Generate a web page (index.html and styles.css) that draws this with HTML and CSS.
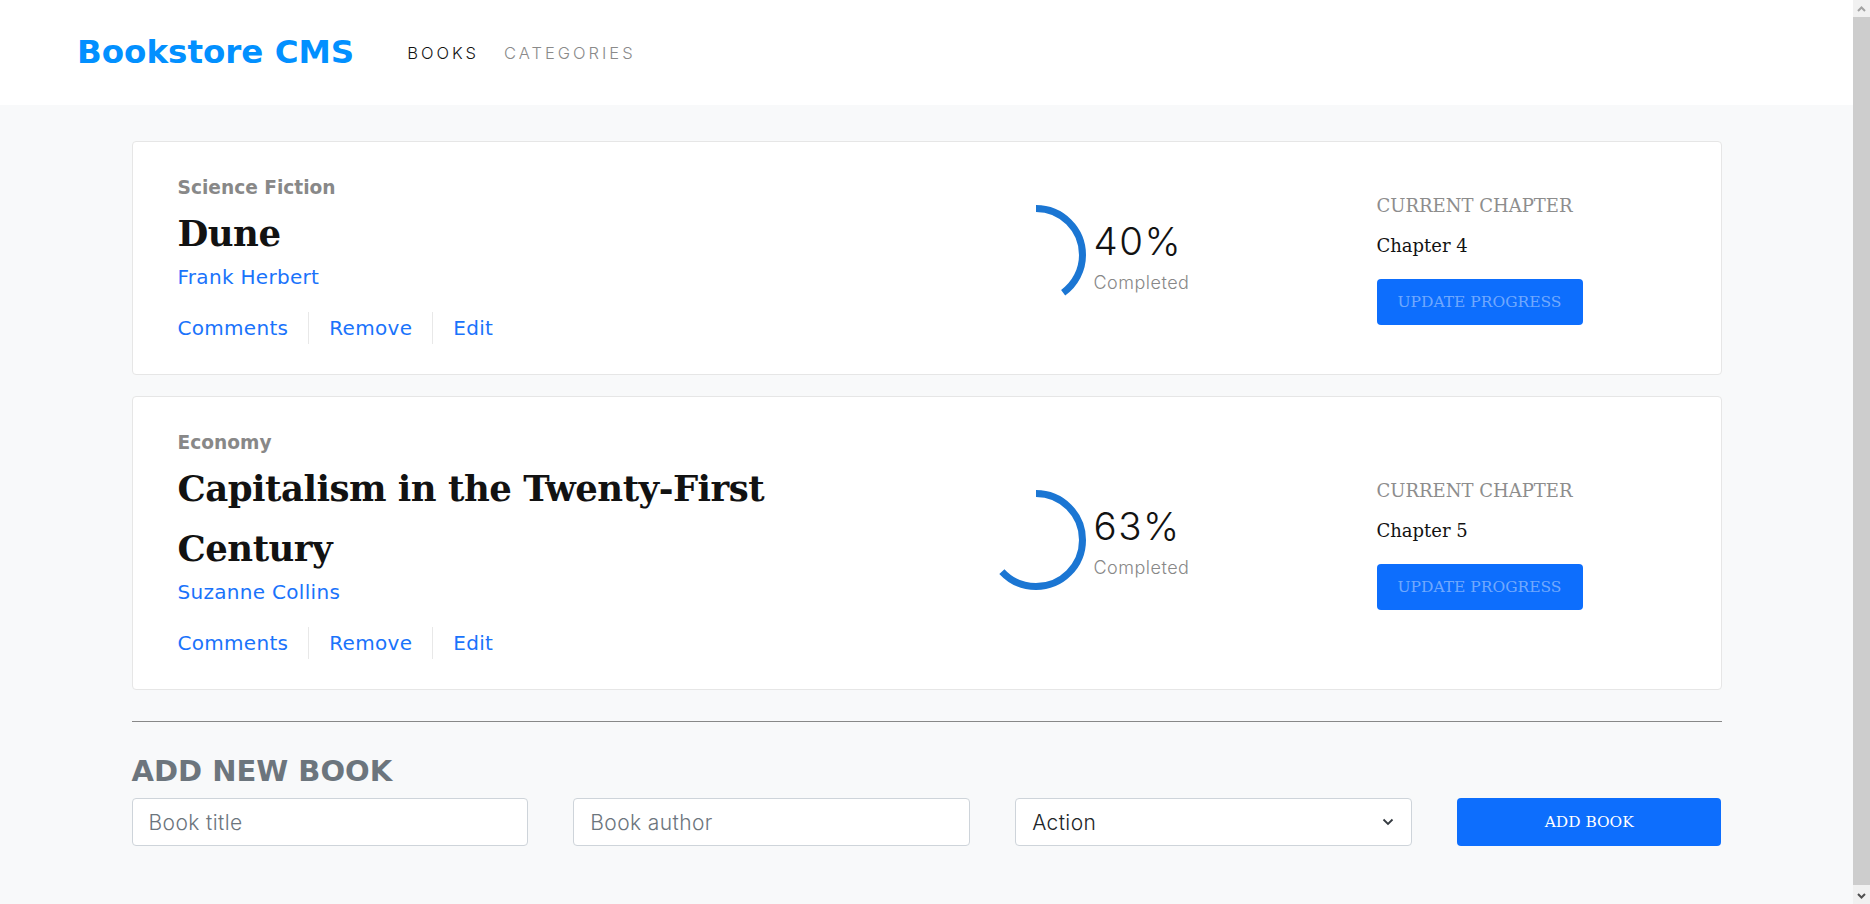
FILE: index.html
```html
<!DOCTYPE html>
<html lang="en">
<head>
<meta charset="utf-8">
<title>Bookstore CMS</title>
<link rel="stylesheet" href="styles.css">
</head>
<body>
<div class="page">
  <header class="topbar">
    <h1 class="logo">Bookstore CMS</h1>
    <nav class="nav">
      <a class="nav-link active" href="#">BOOKS</a>
      <a class="nav-link" href="#">CATEGORIES</a>
    </nav>
  </header>
  <main class="container">
    <ul class="book-list">
      <li class="card">
        <div class="book-info">
          <p class="category">Science Fiction</p>
          <h2 class="title">Dune</h2>
          <p class="author">Frank Herbert</p>
          <div class="actions">
            <button class="action" type="button">Comments</button>
            <button class="action" type="button">Remove</button>
            <button class="action" type="button">Edit</button>
          </div>
        </div>
        <div class="progress">
          <svg class="ring" viewBox="0 0 100 100" aria-hidden="true">
            <circle class="ring-arc" cx="50" cy="50" r="46.5" stroke-dasharray="116.9 400" transform="rotate(-90 50 50)"/>
          </svg>
          <div class="progress-text">
            <p class="percent">40%</p>
            <p class="completed">Completed</p>
          </div>
        </div>
        <div class="chapter">
          <p class="chapter-label">CURRENT CHAPTER</p>
          <p class="chapter-name">Chapter 4</p>
          <button class="update-btn" type="button">UPDATE PROGRESS</button>
        </div>
      </li>
      <li class="card">
        <div class="book-info">
          <p class="category">Economy</p>
          <h2 class="title">Capitalism in the Twenty-First Century</h2>
          <p class="author">Suzanne Collins</p>
          <div class="actions">
            <button class="action" type="button">Comments</button>
            <button class="action" type="button">Remove</button>
            <button class="action" type="button">Edit</button>
          </div>
        </div>
        <div class="progress">
          <svg class="ring" viewBox="0 0 100 100" aria-hidden="true">
            <circle class="ring-arc" cx="50" cy="50" r="46.5" stroke-dasharray="184.1 400" transform="rotate(-90 50 50)"/>
          </svg>
          <div class="progress-text">
            <p class="percent">63%</p>
            <p class="completed">Completed</p>
          </div>
        </div>
        <div class="chapter">
          <p class="chapter-label">CURRENT CHAPTER</p>
          <p class="chapter-name">Chapter 5</p>
          <button class="update-btn" type="button">UPDATE PROGRESS</button>
        </div>
      </li>
    </ul>
    <hr class="divider">
    <section class="add-book">
      <h2 class="form-title">ADD NEW BOOK</h2>
      <form class="form">
        <input class="field" type="text" placeholder="Book title">
        <input class="field" type="text" placeholder="Book author">
        <div class="select-wrap">
          <select class="field select">
            <option>Action</option>
            <option>Science Fiction</option>
            <option>Economy</option>
          </select>
          <svg class="chevron" viewBox="0 0 12 8" aria-hidden="true">
            <path d="M1.5 1.5 6 6l4.5-4.5"/>
          </svg>
        </div>
        <button class="add-btn" type="button">ADD BOOK</button>
      </form>
    </section>
  </main>
</div>
<div class="scrollbar" aria-hidden="true">
  <div class="sb-btn">
    <svg class="sb-arrow sb-up" viewBox="0 0 9 6"><path d="M1 5 4.5 1.5 8 5"/></svg>
  </div>
  <div class="sb-track"><div class="sb-thumb"></div></div>
  <div class="sb-btn">
    <svg class="sb-arrow sb-down" viewBox="0 0 9 6"><path d="M1 1 4.5 4.5 8 1"/></svg>
  </div>
</div>
</body>
</html>
```
FILE: styles.css
```css
* {
  box-sizing: border-box;
}

body {
  margin: 0;
  height: 100vh;
  overflow: hidden;
  display: flex;
  background: #f8f9fa;
  font-family: "DejaVu Sans", sans-serif;
}

.page {
  flex: 1;
  min-width: 0;
  background: #f8f9fa;
}

/* Fake browser scrollbar */
.scrollbar {
  width: 17px;
  flex: none;
  display: flex;
  flex-direction: column;
  background: #f1f1f1;
}

.sb-btn {
  height: 17px;
  flex: none;
  display: flex;
  align-items: center;
  justify-content: center;
}

.sb-arrow {
  width: 9px;
  height: 6px;
  fill: none;
  stroke-width: 2;
}

.sb-up {
  stroke: #a3a3a3;
}

.sb-down {
  stroke: #505050;
}

.sb-track {
  flex: 1;
  display: flex;
  padding-bottom: 2px;
}

.sb-thumb {
  flex: 1;
  background: #cdcdcd;
}

/* Header */
.topbar {
  height: 105px;
  background: #fff;
  display: flex;
  align-items: center;
  padding-left: 77px;
}

.logo {
  margin: 0;
  font: bold 32.5px/37px "DejaVu Sans", sans-serif;
  color: #0290ff;
}

.nav {
  display: flex;
  gap: 25px;
  margin-left: 53px;
}

.nav-link {
  font: 300 16.5px/20px "Inter", sans-serif;
  letter-spacing: 3px;
  color: #8a8a8a;
  text-decoration: none;
}

.nav-link.active {
  color: #121212;
}

/* Main */
.container {
  width: 1590px;
  margin: 36px auto 0;
}

.book-list {
  list-style: none;
  margin: 0;
  padding: 0;
  display: flex;
  flex-direction: column;
  gap: 21px;
}

.card {
  display: flex;
  align-items: center;
  background: #fff;
  border: 1px solid #e6e6e6;
  border-radius: 4px;
  padding: 35px 45px 30px;
}

.book-info {
  width: 808px;
  flex: none;
}

.category {
  margin: 0;
  font: bold 18.6px/22px "DejaVu Sans", sans-serif;
  color: #888;
}

.title {
  margin: 5.2px 0 0;
  max-width: 660px;
  font: bold 35.5px/60px "DejaVu Serif", serif;
  letter-spacing: -0.5px;
  color: #121212;
}

.author {
  margin: 1px 0 0;
  font: 20px/24px "DejaVu Sans", sans-serif;
  letter-spacing: 0.3px;
  color: #1a73fb;
}

.actions {
  display: flex;
  margin-top: 23px;
}

.action {
  background: none;
  border: 0;
  border-right: 1px solid #e8e8e8;
  padding: 0 20px;
  font: 20px/32px "DejaVu Sans", sans-serif;
  letter-spacing: 0.3px;
  color: #1a73fb;
  cursor: pointer;
}

.action:first-child {
  padding-left: 0;
}

.action:last-child {
  border-right: 0;
}

/* Progress */
.progress {
  width: 391px;
  flex: none;
  display: flex;
  align-items: flex-start;
  margin-bottom: 12px;
}

.ring {
  width: 100px;
  height: 100px;
  flex: none;
}

.ring-arc {
  fill: none;
  stroke: #1b76d3;
  stroke-width: 7;
}

.progress-text {
  margin: 16px 0 0 8px;
}

.percent {
  margin: 0;
  font: 300 38.5px/40px "Inter", sans-serif;
  letter-spacing: 1.5px;
  color: #121212;
}

.completed {
  margin: 11px 0 0;
  font: 300 18px/22px "Inter", sans-serif;
  letter-spacing: 0.5px;
  color: #888;
}

/* Chapter */
.chapter {
  display: flex;
  flex-direction: column;
  align-items: flex-start;
  margin-bottom: 4px;
}

.chapter-label {
  margin: 0;
  font: 18px/25px "DejaVu Serif", serif;
  color: #8d8d8d;
}

.chapter-name {
  margin: 15px 0 0;
  font: 18px/26px "DejaVu Serif", serif;
  color: #121212;
}

.update-btn {
  margin-top: 20px;
  width: 206px;
  height: 46px;
  border: 0;
  border-radius: 4px;
  background: #0d6efd;
  color: rgba(255, 255, 255, 0.42);
  font: 15.5px "DejaVu Serif", serif;
  cursor: pointer;
}

/* Add book */
.divider {
  margin: 31px 0 0;
  border: 0;
  border-top: 1px solid #888;
}

.form-title {
  margin: 32px 0 0;
  font: bold 29px/34px "DejaVu Sans", sans-serif;
  color: #6c757d;
}

.form {
  display: grid;
  grid-template-columns: 3fr 3fr 3fr 2fr;
  gap: 45px;
  margin: 10px 0 0;
}

.field {
  width: 100%;
  min-width: 0;
  height: 48px;
  margin: 0;
  border: 1px solid #ced4da;
  border-radius: 4px;
  background: #fff;
  padding: 0 16px;
  font: 300 21px "Inter", sans-serif;
  letter-spacing: 0.4px;
  color: #212529;
  outline: none;
}

.field::placeholder {
  color: #6c757d;
}

.select-wrap {
  position: relative;
  min-width: 0;
}

.select {
  appearance: none;
  -webkit-appearance: none;
}

.chevron {
  position: absolute;
  right: 18px;
  top: 20px;
  width: 12px;
  height: 8px;
  fill: none;
  stroke: #343a40;
  stroke-width: 1.8;
  pointer-events: none;
}

.add-btn {
  height: 48px;
  border: 0;
  border-radius: 4px;
  background: #0d6efd;
  color: #fff;
  font: 15.4px "DejaVu Serif", serif;
  cursor: pointer;
}
```
